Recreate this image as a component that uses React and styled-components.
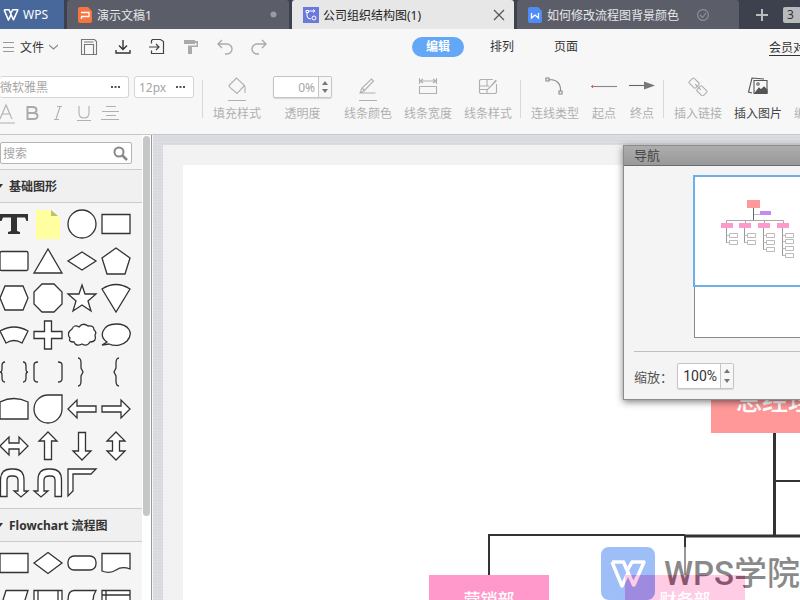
import React from "react";
import styled, { createGlobalStyle, css } from "styled-components";

const GlobalStyle = createGlobalStyle`
  * { box-sizing: border-box; }
  html, body { margin: 0; overflow: hidden; }
  body, button, input, select {
    font-family: "Noto Sans", "Noto Sans CJK SC", sans-serif;
    font-size: 12px;
    color: #333;
  }
  button, input, select { margin: 0; padding: 0; border: 0; background: none; outline: none; }
  svg { display: block; flex: none; }
`;

/* ---------- shell ---------- */
const Shell = styled.div`
  display: flex;
  flex-direction: column;
  height: 100vh;
  overflow: hidden;
  background: #f7f7f7;
`;

const TabBar = styled.header`
  display: flex;
  flex: none;
  height: 29px;
  gap: 3px;
  background: #3d404d;
  overflow: hidden;
`;

const HomeTab = styled.button`
  display: flex;
  align-items: center;
  gap: 4px;
  flex: none;
  width: 64px;
  padding-left: 3px;
  background: #48689b;
  color: #fff;
`;

const DocTab = styled.button`
  display: flex;
  align-items: center;
  flex: none;
  width: 222px;
  padding: 0 ${(p) => (p.$active ? 9 : 12)}px 0 ${(p) => (p.$active ? 11 : 11)}px;
  gap: ${(p) => (p.$active ? 4 : 5)}px;
  border-radius: 3px 3px 0 0;
  background: ${(p) => (p.$active ? "#e7e7e7" : "#5b5d68")};
  color: ${(p) => (p.$active ? "#222" : "#e8e8ea")};
`;

const TabTitle = styled.span`
  flex: 1;
  text-align: left;
  white-space: nowrap;
`;

const TabTools = styled.div`
  display: flex;
  align-items: center;
  gap: 14px;
  padding-left: 13px;
`;

const PlainButton = styled.button`
  display: flex;
  flex: none;
  align-items: center;
  justify-content: center;
`;

const CountBadge = styled.span`
  flex: none;
  width: 18px;
  height: 16px;
  padding-left: 4px;
  border-radius: 2px;
  background: #b9babd;
  color: #333;
  line-height: 16px;
`;

/* ---------- menu row ---------- */
const MenuRow = styled.nav`
  display: flex;
  flex: none;
  align-items: center;
  height: 36px;
  padding-left: 3px;
`;

const FileMenu = styled.button`
  display: flex;
  flex: none;
  align-items: center;
  gap: 5px;
  width: 69px;
`;

const QuickButton = styled(PlainButton)`
  width: 34px;
  height: 28px;
`;

const ModeTabs = styled.div`
  display: flex;
  flex: none;
  gap: 12px;
  margin-left: 136px;
`;

const ModeTab = styled.button`
  width: 52px;
  height: 20px;
  border-radius: 10px;
  line-height: 18px;
  ${(p) =>
    p.$active &&
    css`
      background: #62a8f6;
      color: #fff;
      font-weight: 700;
    `}
`;

const MemberLink = styled.a`
  flex: none;
  margin-left: auto;
  margin-right: -17px;
  color: #333;
  white-space: nowrap;
  text-decoration: underline;
  text-underline-offset: 3px;
`;

/* ---------- toolbar ---------- */
const Toolbar = styled.section`
  display: flex;
  flex: none;
  align-items: flex-start;
  height: 70px;
  padding-top: 11px;
  border-bottom: 1px solid #c8c8c8;
  overflow: hidden;
`;

const FontGroup = styled.div`
  display: flex;
  flex-direction: column;
  gap: 3px;
  flex: none;
  width: 194px;
`;

const FontRow = styled.div`
  display: flex;
  gap: 5px;
`;

const SelectBox = styled.label`
  display: flex;
  align-items: center;
  flex: ${(p) => (p.$grow ? "1" : "none")};
  width: 60px;
  height: 22px;
  padding: 0 8px 0 ${(p) => (p.$grow ? 0 : 4)}px;
  border: 1px solid #d5d5d5;
  border-left-width: ${(p) => (p.$grow ? 0 : 1)}px;
  border-radius: 3px;
  background: #fff;

  select {
    flex: 1;
    min-width: 0;
    appearance: none;
    color: #a5a5a5;
  }
`;

const FormatRow = styled.div`
  display: flex;
  align-items: center;
`;

const FormatButton = styled(PlainButton)`
  width: ${(p) => p.$w || 26}px;
  height: 24px;
`;

const Divider = styled.span`
  flex: none;
  width: 1px;
  height: 38px;
  margin: 4px 10px 0 8px;
  background: #d8d8d8;
`;

const ToolGroup = styled.div`
  display: flex;
  flex: none;
  gap: 12px;
`;

const Tool = styled.button`
  display: flex;
  flex-direction: column;
  align-items: center;
  flex: none;
  min-width: ${(p) => p.$w || 48}px;
  color: ${(p) => (p.$on ? "#444" : "#b0b0b0")};
  white-space: nowrap;
  line-height: 16px;
`;

const ToolIcon = styled.span`
  display: flex;
  align-items: flex-start;
  justify-content: center;
  height: 30px;
`;

const OpacityField = styled.label`
  display: flex;
  flex-direction: column;
  align-items: center;
  gap: 8px;
  color: #b0b0b0;
  line-height: 16px;
`;

const Spinner = styled.span`
  display: flex;
  width: ${(p) => p.$w}px;
  height: ${(p) => p.$h}px;
  border: 1px solid #c4c4c4;
  border-radius: 2px;
  background: #fff;
  box-shadow: 0 1px 1px #d8d8d8;

  input {
    flex: 1;
    min-width: 0;
    padding-right: 3px;
    text-align: right;
    color: ${(p) => (p.$strong ? "#333" : "#a5a5a5")};
  }
`;

const Steps = styled.span`
  display: flex;
  flex-direction: column;
  justify-content: space-evenly;
  align-items: center;
  width: 13px;
  border-left: 1px solid #c4c4c4;
  background: #f7f7f7;
`;

/* ---------- workspace ---------- */
const Workspace = styled.main`
  display: flex;
  flex: 1;
  min-height: 0;
`;

const Sidebar = styled.aside`
  display: flex;
  flex: none;
  width: 153px;
  background: #f5f5f5;
  border-right: 1px solid #f5f5f5;
  overflow: hidden;
`;

const ShapeList = styled.div`
  flex: 1;
  min-width: 0;
`;

const ScrollTrack = styled.div`
  flex: none;
  width: 10px;
  padding: 1px 1px 0;
  background: #fff;
  border-right: 1px solid #989898;
`;

const ScrollThumb = styled.div`
  width: 7px;
  height: 82%;
  border-radius: 4px;
  background: #c6c6c6;
`;

const SearchBox = styled.label`
  display: flex;
  align-items: center;
  height: 22px;
  margin: 7px 10px 5px 0;
  padding: 0 3px 0 2px;
  border: 1px solid #b4b4b4;
  border-radius: 2px;
  background: #fff;

  input { flex: 1; min-width: 0; }
  input::placeholder { color: #a5a5a5; opacity: 1; }
`;

const SectionHead = styled.h2`
  display: flex;
  align-items: center;
  gap: 6px;
  height: 34px;
  margin: 0;
  border: solid #ccc;
  border-width: 1px 0;
  background: #f0f0f0;
  font-size: 12px;
  font-weight: 700;
  white-space: nowrap;
`;

const ShapeGrid = styled.div`
  display: grid;
  grid-template-columns: repeat(4, 34px);
  grid-auto-rows: 37px;
  margin-left: -3px;
  padding: 2px 0 ${(p) => p.$end || 0}px;
`;

const ShapeButton = styled(PlainButton)``;

const Canvas = styled.section`
  position: relative;
  flex: 1;
  min-width: 0;
  overflow: hidden;
  padding: 10px 0 0 10px;
  background-color: #dbdce1;
  background-image:
    repeating-linear-gradient(0deg, #d7d8dd 0 1px, transparent 1px 3px),
    repeating-linear-gradient(90deg, #dedfe4 0 1px, transparent 1px 4px);
`;

const Sheet = styled.div`
  height: 100%;
  padding: 20px 0 0 20px;
  background: #f2f2f2;
`;

const Paper = styled.div`
  position: relative;
  height: 100%;
  background: #fff;
`;

const Wires = styled.svg`
  position: absolute;
  left: 0;
  top: 0;
`;

const ChartNode = styled.div`
  position: absolute;
  left: ${(p) => p.$x}px;
  top: ${(p) => p.$y}px;
  display: flex;
  align-items: center;
  justify-content: center;
  width: ${(p) => (p.$root ? 128 : 120)}px;
  height: ${(p) => (p.$root ? 68 : 46)}px;
  background: ${(p) => (p.$root ? "#ff9999" : "#ff99cc")};
  color: #fff;
  font-size: ${(p) => (p.$root ? 26 : 17)}px;
  font-weight: 500;
  white-space: nowrap;
`;

const Watermark = styled.div`
  position: absolute;
  right: 0;
  bottom: 0;
  display: flex;
  align-items: center;
  gap: 9px;
  height: 53px;
  background: #fff;
  opacity: 0.5;
  color: #151515;
  font-family: Roboto, "Noto Sans CJK SC", sans-serif;
  font-size: 33px;
  font-weight: 500;
  line-height: 50px;
  white-space: nowrap;
`;

/* ---------- navigator ---------- */
const Navigator = styled.section`
  position: absolute;
  top: 10px;
  right: -74px;
  width: 251px;
  border: 1px solid #8c8c8c;
  background: #f4f4f4;
  box-shadow: 0 2px 7px rgba(0, 0, 0, 0.5);
`;

const NavTitle = styled.h2`
  height: 20px;
  margin: 0;
  padding-left: 10px;
  border-bottom: 1px solid #6c6c6c;
  background: linear-gradient(#adadad, #999);
  color: #444;
  font-size: 13px;
  font-weight: 400;
  line-height: 19px;
`;

const Overview = styled.div`
  height: 162px;
  margin: 10px 9px 13px 70px;
  border: 1px solid #888;
  background: #fff;
`;

const Viewport = styled.div`
  height: 112px;
  margin: -2px -2px 0;
  border: 2px solid #6cb0ea;
`;

const ZoomRow = styled.div`
  margin: 0 10px;
  padding: 11px 0 10px;
  border-top: 1px solid #c0c0c0;

  label {
    display: flex;
    align-items: center;
    gap: 1px;
    font-size: 13px;
    color: #555;
  }
  label > span:first-child { width: 42px; white-space: nowrap; }
  input { font-family: Roboto, sans-serif; font-size: 14px; }
`;

/* ---------- drawings ---------- */
const Arrow = ({ up }) => (
  <svg width="6" height="4"><path d={up ? "M0 4L3 0L6 4Z" : "M0 0L3 4L6 0Z"} fill="#777" /></svg>
);

const Dots = ({ color = "#555" }) => (
  <svg width="9" height="3"><path d="M0 0h2v2H0zM3.500 0h2v2h-2zM7 0h2v2H7z" fill={color} /></svg>
);

const Icon = ({ w = 20, h = 20, color = "#b0b0b0", sw = 1.1, children }) => (
  <svg width={w} height={h} viewBox={`0 0 ${w} ${h}`} fill="none" stroke={color} strokeWidth={sw}>{children}</svg>
);

const LogoMark = ({ w, h, sw = 7 }) => (
  <svg width={w} height={h} viewBox="0 0 72 56" fill="none" stroke="#fff" strokeWidth={sw} strokeLinejoin="round">
    <path d="M4 4H27L47 50L54 34M4 4L24 52L36 26M34 22L44 4H68L47 52" />
  </svg>
);

const quickIcons = [
  ["保存", <Icon color="#777"><path d="M2.500 2.500h13l2 2v13h-15zM5.500 17V7.500h9V17M5 5h9.500" /></Icon>],
  ["下载", <Icon color="#333" sw={1.4}><path d="M10 3v9M6 8.500l4 4l4-4M3 13v3h14v-3" /></Icon>],
  ["导出", <Icon color="#444" sw={1.2}><path d="M4.500 6.500v-3l1-1h8l3 2v12h-12v-3M2 10h10M9 7l3 3l-3 3" /></Icon>],
  ["格式刷", <Icon color="#aaa"><path d="M3 3h11v1h3v6h-6v7H7V8.500h8.500V6H14v1H3z" fill="#aaa" stroke="none" /></Icon>],
  ["撤销", <Icon color="#aaa" sw={1.4}><path d="M7 3L3 7l4 4M3 7h9a5 5 0 0 1 0 10h-2" /></Icon>],
  ["恢复", <Icon color="#aaa" sw={1.4}><path d="M13 3l4 4l-4 4M17 7H8a5 5 0 0 0 0 10h2" /></Icon>],
];

const fillIcon = (
  <Icon w={20} h={26}><path d="M2 9.500L9.500 2l8 7.500l-7.500 8l-7-6zM9.500 2l-2 2M16 8l2 3v6M1 24.500h18" /></Icon>
);
const colorIcon = (
  <Icon w={20} h={26}><path d="M2 17l2-5L13.500 3l2 2L6.500 14.500l-4 2.500h15M4 12l2.500 2.500M1 24.500h18" /></Icon>
);
const widthIcon = (
  <Icon><path d="M1.500 2v6M18.500 2v6M2 5h16M5 3L2 5l3 2M15 3l3 2l-3 2M1.500 10.500h17v7h-17z" /></Icon>
);
const styleIcon = (
  <Icon><path d="M15 3.500H2.500l-1 1v12l1 1h15l1-1V8M1.500 10H11M1.500 13.500H10M9 3.500V10M9 17v-3l9.500-9.500M12 11l6-7" /></Icon>
);
const curveIcon = (
  <Icon color="#888"><path d="M4 3.500c8 0 12 4 11.500 12M1 2h3v3H1zM14 15h3v3h-3z" /></Icon>
);
const startIcon = (
  <Icon w={26} color="#888"><path d="M0 10.500h26" /><path d="M0 10.500h2M1.500 9v3" stroke="#f55" /></Icon>
);
const endIcon = (
  <Icon w={26} color="#666"><path d="M0 9.500h20" /><path d="M15 5.500l11 4l-11 4z" fill="#777" stroke="none" /></Icon>
);
const linkIcon = (
  <Icon><g transform="rotate(45 10 11)"><rect x="0" y="7.500" width="9" height="7" rx="1.500" /><rect x="11" y="7.500" width="9" height="7" rx="1.500" /><path d="M6 11h8" /></g></Icon>
);
const pictureIcon = (
  <Icon color="#555"><path d="M6 4.500h13v13H6zM4 17l-3.500-1L4 2l12 1" /><path d="M7 17l4-5l2 2l3-3l3 3v3z" fill="#555" /><circle cx="10" cy="8" r="1.200" /></Icon>
);
const editIcon = (
  <Icon color="#8aa9c8"><path d="M1 2h18v11H1zM3 17h14" /></Icon>
);

const S = ({ d, children }) => (
  <svg width="32" height="32" viewBox="-16 -16 32 32" fill="#fff" stroke="#333" strokeWidth="1.300">
    {d ? <path d={d} /> : children}
  </svg>
);

const basicShapes = [
  ["文本", <S><path d="M-14-10H14V-3H12.500L11-6.500H3V7L6 8V10H-6V8L-3 7V-6.500H-11L-12.500-3H-14Z" fill="#333" stroke="none" /></S>],
  ["便签", <S><path d="M-12-14H3L12-6V15H-12Z" fill="#ffffa0" stroke="none" /><path d="M3-14V-8H10Z" fill="#bfbf70" stroke="none" /></S>],
  ["圆形", <S><circle r="14" /></S>],
  ["矩形", <S d="M-14-9.500H14V9.500H-14Z" />],
  ["圆角矩形", <S><rect x="-14" y="-9.500" width="28" height="19" rx="1.500" /></S>],
  ["三角形", <S d="M0-12L14 12H-14Z" />],
  ["菱形", <S d="M0-9L14 0L0 9L-14 0Z" />],
  ["五边形", <S d="M0-13L14-3L9 13H-9L-14-3Z" />],
  ["六边形", <S d="M-9-12H9L14 0L9 12H-9L-14 0Z" />],
  ["八边形", <S d="M-6-14H6L14-6V6L6 14H-6L-14 6V-6Z" />],
  ["星形", <S d="M0-13L3-4H14L6 3L9 13L0 7L-9 13L-6 3L-14-4H-3Z" />],
  ["扇形", <S d="M-14-9Q0-18 14-9L0 14Z" />],
  ["弧形", <S d="M-14-4Q0-12 14-4L8 8Q0 3-8 8Z" />],
  ["十字", <S d="M-3.500-14H3.500V-3.500H14V3.500H3.500V14H-3.500V3.500H-14V-3.500H-3.500Z" />],
  ["云", <S d="M-10-6Q-8-11-3-8Q1-13 6-9Q12-10 12-5Q15-3 13 0Q15 7 8 7Q5 12 0 9Q-6 12-8 7Q-14 7-12 3Q-16-2-10-6Z" />],
  ["气泡", <S d="M-9 7C-18 1-13-11 0-11S18-2 11 6C7 10 0 12-7 9L-14 10Z" />],
  ["大括号", <S><path d="M-9-10Q-12-10-12-6V-3Q-12 0-14 0Q-12 0-12 3V6Q-12 10-9 10M9-10Q12-10 12-6V-3Q12 0 14 0Q12 0 12 3V6Q12 10 9 10" fill="none" /></S>],
  ["中括号", <S><path d="M-10-10Q-14-10-14-7V7Q-14 10-10 10M10-10Q14-10 14-7V7Q14 10 10 10" fill="none" /></S>],
  ["右括号", <S><path d="M-4-14Q-1-14-1-9V-4L1 0L-1 4V9Q-1 14-4 14" fill="none" /></S>],
  ["左括号", <S><path d="M3-14Q0-14 0-9V-4L-2 0L0 4V9Q0 14 3 14" fill="none" /></S>],
  ["拱顶", <S d="M-14-7Q0-14 14-7V10H-14Z" />],
  ["水滴", <S d="M14-14V0A14 14 0 1 1 0-14Z" />],
  ["左箭头", <S d="M-14 0L-5-9V-3H14V3H-5V9Z" />],
  ["右箭头", <S d="M14 0L5-9V-3H-14V3H5V9Z" />],
  ["左右箭头", <S d="M-14 0L-5-9V-3H5V-9L14 0L5 9V3H-5V9Z" />],
  ["上箭头", <S d="M0-14L9-5H3.500V13.500H-3.500V-5H-9Z" />],
  ["下箭头", <S d="M0 14L9 5H3.500V-13.500H-3.500V5H-9Z" />],
  ["上下箭头", <S d="M0-14L9-5H3.500V5H9L0 14L-9 5H-3.500V-5H-9Z" />],
  ["右回转箭头", <S d="M-13.500 13.500V-3Q-13.500-14-3-14H0Q10-14 10-3V8H14L7 14L0 8H4V-3Q4-7-1-7H-3Q-7-7-7-3V13.500Z" />],
  ["左回转箭头", <S d="M13.500 13.500V-3Q13.500-14 3-14H0Q-10-14-10-3V8H-14L-7 14L0 8H-4V-3Q-4-7 1-7H3Q7-7 7-3V13.500Z" />],
  ["半框", <S d="M-14-14H14L9-9H-9V8L-14 13Z" />],
];

const flowShapes = [
  ["流程", <S d="M-14-9.500H14V9.500H-14Z" />],
  ["判定", <S d="M0-10.500L14 0L0 10.500L-14 0Z" />],
  ["开始结束", <S><rect x="-14" y="-7" width="28" height="14" rx="6" /></S>],
  ["文档", <S d="M-14-9.500H14V6Q6 3 0 7T-14 8Z" />],
  ["数据", <S d="M-8-9.500H14L8 9.500H-14Z" />],
  ["子流程", <S d="M-14-9.500H14V9.500H-14ZM-10-9.500V9.500M10-9.500V9.500" />],
  ["外部数据", <S d="M-8-9.500H14Q8 0 14 9.500H-8Q-14 9.500-14 0T-8-9.500Z" />],
  ["内部存储", <S d="M-14-9.500H14V9.500H-14ZM-10-9.500V9.500M-14-5H14" />],
];

const miniBranches = [
  { x: 34, leaves: [61, 68] },
  { x: 52, leaves: [61, 68] },
  { x: 71, leaves: [61, 68, 75] },
  { x: 90, leaves: [61, 67, 74, 81] },
];

const MiniChart = () => (
  <svg width="105" height="108" fill="none" stroke="#999" strokeWidth="1">
    <path d="M58.500 30V43" stroke="#666" />
    <path d="M59 37.500H66" stroke="#bbb" />
    <path d="M31.500 48V43.500H88.500V48M50.500 43V48M69.500 43V48" stroke="#aaa" />
    <rect x="52" y="23" width="13" height="8" fill="#ff9999" stroke="none" />
    <rect x="65" y="34" width="11" height="4" fill="#c08cf8" stroke="none" />
    {miniBranches.map((b) => (
      <g key={b.x}>
        <rect x={b.x - 8} y="46" width="12" height="5" fill="#ff99cc" stroke="none" />
        <path d={`M${b.x - 2.500} 51V${b.leaves[b.leaves.length - 1] - 2}`} />
        {b.leaves.map((y) => (
          <path key={y} d={`M${b.x - 2.500} ${y - 2.500}h3M${b.x + 0.500} ${y - 4.500}h8v4h-8z`} stroke="#bbb" />
        ))}
      </g>
    ))}
  </svg>
);

const Shapes = ({ items, end }) => (
  <ShapeGrid $end={end}>
    {items.map(([name, drawing]) => (
      <ShapeButton key={name} aria-label={name}>{drawing}</ShapeButton>
    ))}
  </ShapeGrid>
);

const Head = ({ children }) => (
  <SectionHead>
    <svg width="3" height="5"><path d="M0 0h3L0 4z" fill="#333" /></svg>
    {children}
  </SectionHead>
);

const LabelledTool = ({ icon, children, w, on }) => (
  <Tool $w={w} $on={on}><ToolIcon>{icon}</ToolIcon>{children}</Tool>
);

export default function App() {
  return (
    <Shell>
      <GlobalStyle />
      <TabBar>
        <HomeTab><LogoMark w={16} h={12} />WPS</HomeTab>
        <DocTab>
          <svg width="14" height="16"><path d="M2 0h8l4 4v10q0 2-2 2H2q-2 0-2-2V2q0-2 2-2z" fill="#f57440" /><path d="M3 5.500h8v4H3M3.500 9v3" stroke="#fff" strokeWidth="1.300" fill="none" /></svg>
          <TabTitle>演示文稿1</TabTitle>
          <svg width="7" height="7"><circle cx="3.500" cy="3.500" r="3" fill="#999aa2" /></svg>
        </DocTab>
        <DocTab $active>
          <svg width="16" height="16" fill="none" stroke="#fff"><path d="M0 0h16v16H0z" fill="#6b78dc" stroke="none" /><path d="M3 3.500h2.500v2H3zM10 5.500l2-1.500l-2-1.500M6 4h5M4 6v3q0 3 4 3" /><circle cx="11" cy="11" r="2" /></svg>
          <TabTitle>公司组织结构图(1)</TabTitle>
          <Icon w={12} h={12} color="#555" sw={1.2}><path d="M1 1l10 10M11 1L1 11" /></Icon>
        </DocTab>
        <DocTab>
          <svg width="14" height="16"><path d="M2 0h8l4 4v10q0 2-2 2H2q-2 0-2-2V2q0-2 2-2z" fill="#4f8cf5" /><path d="M3.500 6v5l3.500-3l3.500 3V6" stroke="#fff" strokeWidth="1.300" fill="none" /></svg>
          <TabTitle>如何修改流程图背景颜色</TabTitle>
          <Icon w={30} h={12} color="#92939b"><circle cx="6" cy="6" r="5.400" /><path d="M3 6l2.500 2.500L9 4" /></Icon>
        </DocTab>
        <TabTools>
          <PlainButton aria-label="新建"><Icon w={14} h={14} color="#bbb" sw={2}><path d="M7 1v12M1 7h12" /></Icon></PlainButton>
          <CountBadge>3</CountBadge>
        </TabTools>
      </TabBar>

      <MenuRow>
        <FileMenu>
          <Icon w={12} h={12} color="#999"><path d="M0 1.500h11M0 6.500h11M0 10.500h11" /></Icon>
          文件
          <Icon w={9} h={6} color="#888"><path d="M0 1l4.500 4L9 1" /></Icon>
        </FileMenu>
        {quickIcons.map(([name, icon]) => <QuickButton key={name} aria-label={name}>{icon}</QuickButton>)}
        <ModeTabs>
          <ModeTab $active>编辑</ModeTab>
          <ModeTab>排列</ModeTab>
          <ModeTab>页面</ModeTab>
        </ModeTabs>
        <MemberLink href="#member">会员对比</MemberLink>
      </MenuRow>

      <Toolbar>
        <FontGroup>
          <FontRow>
            <SelectBox $grow><select aria-label="字体"><option>微软雅黑</option></select><Dots /></SelectBox>
            <SelectBox><select aria-label="字号"><option>12px</option></select><Dots /></SelectBox>
          </FontRow>
          <FormatRow>
            <FormatButton $w={19} aria-label="文字颜色"><Icon w={19} h={22}><path d="M0 17L6 3l6 14M2 12h8M0 21h15" /></Icon></FormatButton>
            <FormatButton aria-label="加粗"><Icon color="#aaa" sw={2}><path d="M5.500 4h5q4 0 4 3t-4 3h-5h6q4 0 4 3t-4 3h-6zV16" /></Icon></FormatButton>
            <FormatButton aria-label="斜体"><Icon><path d="M9 3.500h5M6 16.500h5M12 4L8 16" /></Icon></FormatButton>
            <FormatButton aria-label="下划线"><Icon><path d="M5 3v7q0 5 5 5t5-5V3M3 17.500h14" /></Icon></FormatButton>
            <FormatButton aria-label="对齐"><Icon><path d="M6 3.500h10M2 8.500h17M6 12.500h10M1 16.500h18" /></Icon></FormatButton>
          </FormatRow>
        </FontGroup>
        <Divider />
        <ToolGroup>
          <LabelledTool icon={fillIcon}>填充样式</LabelledTool>
          <OpacityField>
            <Spinner $w={59} $h={22}><input defaultValue="0%" /><Steps><Arrow up /><Arrow /></Steps></Spinner>
            透明度
          </OpacityField>
          <LabelledTool icon={colorIcon}>线条颜色</LabelledTool>
          <LabelledTool icon={widthIcon}>线条宽度</LabelledTool>
          <LabelledTool icon={styleIcon}>线条样式</LabelledTool>
        </ToolGroup>
        <Divider />
        <ToolGroup>
          <LabelledTool icon={curveIcon}>连线类型</LabelledTool>
          <LabelledTool icon={startIcon} w={26}>起点</LabelledTool>
          <LabelledTool icon={endIcon} w={26}>终点</LabelledTool>
        </ToolGroup>
        <Divider />
        <ToolGroup>
          <LabelledTool icon={linkIcon}>插入链接</LabelledTool>
          <LabelledTool icon={pictureIcon} on>插入图片</LabelledTool>
          <LabelledTool icon={editIcon}>编辑图片</LabelledTool>
        </ToolGroup>
      </Toolbar>

      <Workspace>
        <Sidebar>
          <ShapeList>
            <SearchBox>
              <input placeholder="搜索" aria-label="搜索" />
              <Icon w={15} h={15} color="#888" sw={2}><circle cx="6" cy="6" r="4.500" /><path d="M9 9l5 5" strokeWidth="2.500" /></Icon>
            </SearchBox>
            <Head>基础图形</Head>
            <Shapes items={basicShapes} end={7} />
            <Head>Flowchart 流程图</Head>
            <Shapes items={flowShapes} />
          </ShapeList>
          <ScrollTrack><ScrollThumb /></ScrollTrack>
        </Sidebar>

        <Canvas>
          <Sheet>
            <Paper>
              <Wires width="900" height="500" fill="none" stroke="#333">
                <path d="M591.500 268V370" strokeWidth="3" />
                <path d="M591 316H900M306 410V370H502" strokeWidth="2" />
                <path d="M501 371H900" strokeWidth="3" />
                <path d="M502 370V410" strokeWidth="2" />
              </Wires>
              <ChartNode $root $x={528} $y={200}>总经理</ChartNode>
              <ChartNode $x={246} $y={410}>营销部</ChartNode>
              <ChartNode $x={442} $y={410}>财务部</ChartNode>
            </Paper>
          </Sheet>
          <Watermark>
            <svg width="54" height="53"><rect width="54" height="53" rx="8" fill="#3f7ff3" /><g transform="translate(9 13) scale(.5)" fill="none" stroke="#fff" strokeWidth="7" strokeLinejoin="round"><path d="M4 4H27L47 50L54 34M4 4L24 52L36 26M34 22L44 4H68L47 52" /></g></svg>
            WPS学院
          </Watermark>
          <Navigator>
            <NavTitle>导航</NavTitle>
            <Overview><Viewport><MiniChart /></Viewport></Overview>
            <ZoomRow>
              <label>
                <span>缩放：</span>
                <Spinner $w={57} $h={26} $strong><input defaultValue="100%" /><Steps><Arrow up /><Arrow /></Steps></Spinner>
              </label>
            </ZoomRow>
          </Navigator>
        </Canvas>
      </Workspace>
    </Shell>
  );
}
